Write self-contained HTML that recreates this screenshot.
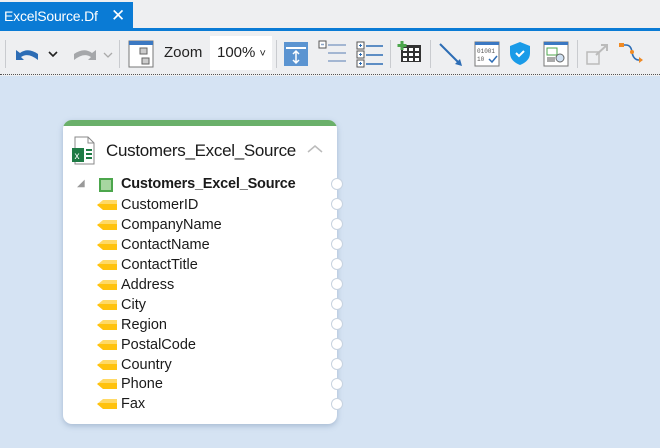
<!DOCTYPE html>
<html><head><style>
*{margin:0;padding:0;box-sizing:border-box}
body{width:660px;height:448px;overflow:hidden;background:#d5e3f3;font-family:"Liberation Sans","DejaVu Sans",sans-serif;position:relative}
.top{position:absolute;left:0;top:0;width:660px;height:29px;background:#eeeff1}
.tab{position:absolute;left:0;top:2px;width:133px;height:28px;background:#0a7bd5;color:#fff;font-size:14px;line-height:28px;padding-left:4px;letter-spacing:-0.2px}
.tab span{position:absolute;left:111px;top:0;font-size:17px}
.bl{position:absolute;left:0;top:28px;width:660px;height:3px;background:#0a7bd5}
.tb{position:absolute;left:0;top:31px;width:660px;height:43px;background:#eeeff1}
.dot{position:absolute;left:0;top:74px;width:660px;height:2px;border-top:1px dotted #555;background:#eeeff1}
.sep{position:absolute;top:40px;width:1px;height:28px;background:#c9cbcf}
.ab{position:absolute}
.zoom{position:absolute;left:164px;top:44px;font-size:15px;color:#222}
.zbox{position:absolute;left:210px;top:36px;width:62px;height:34px;background:#fff;font-size:15px;color:#222;line-height:34px;padding-left:7px}
.card{position:absolute;left:63px;top:120px;width:274px;height:304px;background:#fff;border-radius:9px;box-shadow:0 2px 6px rgba(80,110,150,.35);overflow:hidden}
.green{position:absolute;left:0;top:0;width:100%;height:6px;background:#6ab06a}
.title{position:absolute;left:43px;top:21px;font-size:17px;color:#1a1a1a;letter-spacing:-0.3px}
.row{position:absolute;left:0;height:20px;font-size:14.5px;color:#1a1a1a;line-height:20px}
.tag{position:absolute;left:34px;top:5px;width:20px;height:10px;background:linear-gradient(#ffd966 0 40%,#ffc20e 40%);clip-path:polygon(6px 0,100% 0,100% 100%,6px 100%,0 50%)}
.port{position:absolute;left:331px;width:12px;height:12px;border-radius:50%;background:#fff;border:1px solid #c8d3e0}
</style></head><body>
<div class="top"></div>
<div class="tab">ExcelSource.Df<span>✕</span></div>
<div class="bl"></div>
<div class="tb"></div>
<div class="dot"></div>
<div class="sep" style="left:5px"></div>
<svg class="ab" style="left:14px;top:44px" width="100" height="20">
<path d="M2 16 L2 6 L6 9 Q14 3 24 10 L24 16 Q14 8 7 13 L10 16Z" fill="#2d6db5"/>
<path d="M35 8 l4 4 l4 -4" stroke="#222" stroke-width="1.6" fill="none"/>
<path d="M82 16 L82 6 L78 9 Q70 3 60 10 L60 16 Q70 8 77 13 L74 16Z" fill="#a5a7aa"/>
<path d="M90 9 l4 4 l4 -4" stroke="#aaa" stroke-width="1.3" fill="none"/>
</svg>
<div class="sep" style="left:119px"></div>
<svg class="ab" style="left:128px;top:40px" width="26" height="28"><rect x="1" y="1" width="24" height="26" fill="#fff" stroke="#777"/><rect x="1" y="1" width="24" height="4" fill="#3b78c2"/><rect x="12" y="8" width="7" height="6" fill="#ccc" stroke="#666"/><rect x="14" y="18" width="7" height="6" fill="#ccc" stroke="#666"/></svg>
<div class="zoom">Zoom</div>
<div class="zbox">100% <span style="font-size:11px">˅</span></div>
<div class="sep" style="left:276px"></div>
<svg class="ab" style="left:284px;top:42px" width="24" height="24"><rect width="24" height="24" fill="#5b94d1"/><rect x="2" y="5" width="20" height="2" fill="#fff"/><path d="M12 10v10M9 12l3-3 3 3M9 18l3 3 3-3" stroke="#fff" stroke-width="1.5" fill="none"/></svg>
<svg class="ab" style="left:318px;top:40px" width="30" height="26"><rect x="1" y="1" width="7" height="7" fill="#fff" stroke="#555"/><path d="M3 4.5h3M10 5h18M10 13h18M10 21h18" stroke="#8aa4c7" stroke-width="1.5"/></svg>
<svg class="ab" style="left:356px;top:40px" width="28" height="28"><g fill="#fff" stroke="#555"><rect x="1" y="2" width="7" height="7"/><rect x="1" y="11" width="7" height="7"/><rect x="1" y="20" width="7" height="7"/></g><path d="M3 5.5h3M4.5 4v3M3 14.5h3M4.5 13v3M3 23.5h3M4.5 22v3" stroke="#2d6db5"/><path d="M10 6h17M10 15h17M10 24h17" stroke="#2d6db5" stroke-width="1.5"/></svg>
<div class="sep" style="left:390px"></div>
<svg class="ab" style="left:397px;top:40px" width="26" height="24"><rect x="4" y="5" width="20" height="17" fill="#333"/><g fill="#fff"><rect x="6" y="8" width="4" height="3"/><rect x="12" y="8" width="4" height="3"/><rect x="18" y="8" width="4" height="3"/><rect x="6" y="13" width="4" height="3"/><rect x="12" y="13" width="4" height="3"/><rect x="18" y="13" width="4" height="3"/><rect x="6" y="18" width="4" height="3"/><rect x="12" y="18" width="4" height="3"/><rect x="18" y="18" width="4" height="3"/></g><path d="M5 1v9M0.5 5.5h9" stroke="#4ca64c" stroke-width="3"/></svg>
<div class="sep" style="left:430px"></div>
<svg class="ab" style="left:438px;top:42px" width="26" height="24"><path d="M2 2L22 22" stroke="#2d6db5" stroke-width="2"/><path d="M24 24l-7-2 5-5z" fill="#2d6db5"/></svg>
<svg class="ab" style="left:474px;top:41px" width="26" height="26"><rect x="1" y="1" width="24" height="24" fill="#fff" stroke="#777"/><rect x="1" y="1" width="24" height="3" fill="#3b78c2"/><text x="3" y="12" font-size="6" fill="#555" font-family="Liberation Mono">01001</text><text x="3" y="20" font-size="6" fill="#555" font-family="Liberation Mono">10</text><path d="M15 18l3 3 5-6" stroke="#2d6db5" stroke-width="1.5" fill="none"/></svg>
<svg class="ab" style="left:509px;top:41px" width="22" height="25"><path d="M11 1L21 5V12Q21 20 11 24Q1 20 1 12V5Z" fill="#1a9be8"/><path d="M7 12l3 3 5-5" stroke="#fff" stroke-width="2" fill="none"/></svg>
<svg class="ab" style="left:543px;top:41px" width="26" height="26"><rect x="1" y="1" width="24" height="24" fill="#fff" stroke="#777"/><rect x="1" y="1" width="24" height="3" fill="#3b78c2"/><rect x="4" y="7" width="10" height="7" fill="none" stroke="#4ca64c"/><rect x="4" y="16" width="8" height="5" fill="#aaa"/><circle cx="17" cy="17" r="4" fill="#cfe0f2" stroke="#666"/></svg>
<div class="sep" style="left:577px"></div>
<svg class="ab" style="left:586px;top:42px" width="24" height="24"><rect x="1" y="10" width="12" height="12" fill="none" stroke="#bbb" stroke-width="1.5"/><path d="M10 13L21 3M15 3h6v6" stroke="#bbb" stroke-width="2" fill="none"/></svg>
<svg class="ab" style="left:619px;top:42px" width="26" height="24"><path d="M1 3h6Q12 3 13 10Q14 17 19 18h4" stroke="#2d6db5" stroke-width="1.6" fill="none"/><rect x="0" y="1" width="5" height="4" fill="#f08a24"/><path d="M20 15l4 3-4 3z" fill="#f08a24"/><circle cx="13" cy="10" r="2" fill="#f08a24"/></svg>

<div class="card">
<div class="green"></div>
<svg class="ab" style="left:7px;top:16px" width="30" height="30"><path d="M5 1h13l6 6v21H5z" fill="#fff" stroke="#888"/><path d="M18 1v6h6" fill="none" stroke="#888"/><rect x="2" y="12" width="12" height="14" fill="#1f7b45"/><text x="4.5" y="23" font-size="10" fill="#fff" font-family="Liberation Sans">x</text><path d="M16 14h6M16 18h6M16 22h6" stroke="#1f7b45" stroke-width="2"/></svg>
<div class="title">Customers_Excel_Source</div>
<svg class="ab" style="left:244px;top:24px" width="16" height="10"><path d="M1 8l7-6 7 6" stroke="#bbb" stroke-width="1.5" fill="none"/></svg>
<div class="row" style="top:54px;left:0;width:274px"><span style="position:absolute;left:14px;top:0;color:#999;font-size:10px">◢</span><span style="position:absolute;left:36px;top:4px;width:14px;height:14px;background:#a7d6a0;border:2px solid #4ca64c"></span><b style="position:absolute;left:58px;letter-spacing:-0.2px">Customers_Excel_Source</b></div>
</div>
<div class="port" style="top:178px"></div>
<div class="port" style="top:198px"></div>
<div class="port" style="top:218px"></div>
<div class="port" style="top:238px"></div>
<div class="port" style="top:258px"></div>
<div class="port" style="top:278px"></div>
<div class="port" style="top:298px"></div>
<div class="port" style="top:318px"></div>
<div class="port" style="top:338px"></div>
<div class="port" style="top:358px"></div>
<div class="port" style="top:378px"></div>
<div class="port" style="top:398px"></div>
<div style="position:absolute;left:63px;top:0">
<div class="row" style="top:195px"><i class="tag"></i><span style="position:absolute;left:58px">CustomerID</span></div>
<div class="row" style="top:215px"><i class="tag"></i><span style="position:absolute;left:58px">CompanyName</span></div>
<div class="row" style="top:235px"><i class="tag"></i><span style="position:absolute;left:58px">ContactName</span></div>
<div class="row" style="top:255px"><i class="tag"></i><span style="position:absolute;left:58px">ContactTitle</span></div>
<div class="row" style="top:275px"><i class="tag"></i><span style="position:absolute;left:58px">Address</span></div>
<div class="row" style="top:295px"><i class="tag"></i><span style="position:absolute;left:58px">City</span></div>
<div class="row" style="top:315px"><i class="tag"></i><span style="position:absolute;left:58px">Region</span></div>
<div class="row" style="top:335px"><i class="tag"></i><span style="position:absolute;left:58px">PostalCode</span></div>
<div class="row" style="top:355px"><i class="tag"></i><span style="position:absolute;left:58px">Country</span></div>
<div class="row" style="top:374px"><i class="tag"></i><span style="position:absolute;left:58px">Phone</span></div>
<div class="row" style="top:394px"><i class="tag"></i><span style="position:absolute;left:58px">Fax</span></div>
</div>
</body></html>
